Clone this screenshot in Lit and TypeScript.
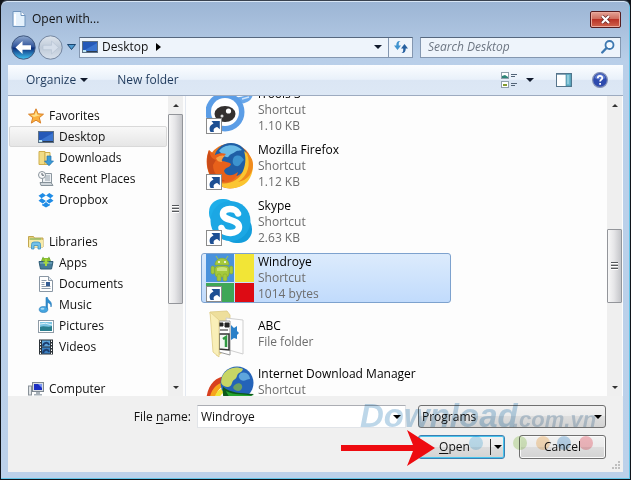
import { LitElement, html, css, svg, nothing } from "lit";
import { customElement, property } from "lit/decorators.js";
import { classMap } from "lit/directives/class-map.js";

const shortcut = svg`
  <rect x=".5" y="32.5" width="15" height="15" fill="#fff" stroke="#8b8b8b"/>
  <path d="M4.500 46C2.500 42 4 39 7.500 37.500L5.500 35h8.300v8.300L11.200 41C8 41.500 7 43.500 8 46z" fill="#1d4f93"/>`;

const small: Record<string, unknown> = {
  page: svg`<path d="M2 .5h8l4 4v11H2z" fill="#e4f1fc" stroke="#6f94bd"/><path d="M10 .5v4h4" fill="#fff" stroke="#6f94bd"/><path d="M4 3v11" stroke="#fff" stroke-width="2"/>`,
  desktop: svg`<rect x="0" y="2" width="16" height="12" fill="#5e7185"/><rect x="1" y="3" width="14" height="9" fill="#2458b8"/><path d="M1 12 15 4v8z" fill="#3a74d0"/><rect x="1" y="11" width="3" height="2" fill="#b9e4f4"/><rect x="5" y="12" width="10" height="1" fill="#2c3b4e"/>`,
  star: svg`<path d="M8 .8l2.100 5 5.400.4-4.200 3.500 1.400 5.400L8 12.200l-4.700 2.900 1.400-5.400L.5 6.200l5.400-.4z" fill="#fbb03c" stroke="#d9822b"/><path d="M8 3l1.300 3.800 3.700.3L6 9 3 7.100l3.700-.3z" fill="#ffe08a"/>`,
  downloads: svg`<path d="M1 1.500h6v13H1z" fill="#f1dc86" stroke="#cfae4c"/><path d="M7 2.500h5v12H7z" fill="#f8eaa6" stroke="#cfae4c"/><path d="M9 6h4v5h2.500l-4.500 4.700L6.500 11H9z" fill="#3b9ad6" stroke="#2272b0" stroke-width=".7"/>`,
  recent: svg`<path d="M4.500 2.500h9v10h-9z" fill="#eef1f4" stroke="#8c979f"/><path d="M7 5h5M7 7h5M7 9h5" stroke="#93a0aa"/><path d="M2 11.500h11l2 3H3z" fill="#cfd6db" stroke="#87929a"/><circle cx="4" cy="4" r="3.500" fill="#f8f9fa" stroke="#8a949c"/><path d="M4 2v2.200h2" fill="none" stroke="#58636c"/>`,
  dropbox: svg`<g fill="#1f8ce6"><path d="M4.700 1 .5 3.800l3 2.500L8 3.600zM11.300 1l4.200 2.800-3 2.500L8 3.600zM3.500 6.300l-3 2.500 4.200 2.700L8 8.900zM12.500 6.300l3 2.500-4.200 2.700L8 8.900zM4 12l.9.5L8 10l3.100 2.500.9-.5v1.200L8 15.500l-4-2.300z"/></g>`,
  libraries: svg`<path d="M.5 2.500h5l1 1.500h8.500v9H.5z" fill="#e5cf78" stroke="#c2a750"/><path d="M1 6h14v7H1z" fill="#f8eba9"/><path d="M2 5h11" stroke="#76b96a"/><path d="M3.500 15V10.500Q3.500 8 6 8h4q2.500 0 2.500 2.500V15H10v-3.500H6V15z" fill="#73c1ea" stroke="#3d8fc0" stroke-width=".8"/>`,
  apps: svg`<path d="M3 6 5 1.500 7 5zM9 5l2-3.500L13 6z" fill="#5a9c2f"/><rect x="4" y="3" width="8" height="5" rx="2" fill="#8bbf2f"/><path d="M1 6.500h14l-1.500 7.500h-11z" fill="#467c98" stroke="#2f5d77"/><path d="M2 8h12" stroke="#7fb5cc"/><path d="M8 4v7M5.500 7.500h5" stroke="#a6d83c" stroke-width="2"/>`,
  documents: svg`<path d="M1.500.5h9l4 4v11h-13z" fill="#fff" stroke="#8a97a4"/><path d="M10.500.5v4h4" fill="#dfe7ee" stroke="#8a97a4"/><path d="M3.500 4.500h5M3.500 6.500h3M3.500 8.500h3M3.500 10.500h9M3.500 12.500h9" stroke="#8d9cac"/><rect x="8" y="6" width="4" height="4" fill="#355d93"/>`,
  music: svg`<path d="M8 .5h1.500c.3 3.500 5.500 3.500 3.500 9.500 0-3-1.500-4-3.500-4.500v6.800H8z" fill="#2f8ed0" stroke="#2479b8" stroke-width=".6"/><ellipse cx="5.500" cy="12.500" rx="4.300" ry="3" fill="#45a5e0" stroke="#2479b8" stroke-width=".6"/><ellipse cx="4.500" cy="11.700" rx="2" ry="1" fill="#a5d9f5"/>`,
  pictures: svg`<rect x=".5" y="2.500" width="15" height="12" fill="#fff" stroke="#8f9ba6"/><rect x="2" y="4" width="12" height="9" fill="#7cc5e3"/><path d="M2 9c4-2 8 1 12-1v5H2z" fill="#2a7f8f"/><path d="M2 6q5-2 12 1" stroke="#dff3fa" fill="none"/>`,
  videos: svg`<rect x="1" y=".5" width="14" height="15" fill="#2c3338"/><rect x="4" y="1.500" width="8" height="6" fill="#5da4da"/><rect x="4" y="8.500" width="8" height="6" fill="#3b7fc0"/><path d="M5 7c1-4 5-4 6-1M5 14c1-4 5-4 6-1" stroke="#1c3e70" stroke-width="2" fill="none"/><path d="M2.500 1.500v14M13.500 1.500v14" stroke="#fff" stroke-dasharray="1.500 1.500"/>`,
  computer: svg`<rect x=".5" y="5" width="3" height="9" fill="#dfe3e6" stroke="#8a9299"/><rect x="4.500" y="1.500" width="11" height="9" fill="#d9dde2" stroke="#7d8790"/><rect x="6" y="3" width="8" height="6" fill="#1c2fc2"/><path d="M10 3h4v4z" fill="#7996f2"/><path d="M8 11h4v2h2v1.500H6V13h2z" fill="#a8b1b9"/>`,
  refresh: svg`<path d="M7.500 2C5.500 2.500 5.800 4.500 5.800 6.500H8L4.500 11 1 6.500h2.300C3.200 3.500 4.500 1.500 7.500 2z" fill="#3f93cf"/><path d="M8.500 14c2-.5 1.700-2.500 1.700-4.500H8L11.500 5 15 9.500h-2.300c.1 3-1.200 5-4.200 4.500z" fill="#255f9f"/>`,
  search: svg`<circle cx="9.500" cy="6" r="4" fill="#f3f9ff" stroke="#3e78b0" stroke-width="1.800"/><path d="M6.500 9 2.200 13.500" stroke="#3e78b0" stroke-width="2.400" stroke-linecap="round"/>`,
  views: svg`<g fill="#fff" stroke="#90a0ab"><rect x=".5" y=".5" width="7" height="6"/><rect x=".5" y="9.500" width="7" height="6"/></g><path d="M1 6V4l3-1 3 2v1z" fill="#2d8577"/><path d="M2 12h4v2H2z" fill="#839c2f"/><path d="M10 2.500h6M10 4.500h4M10 11.500h6M10 13.500h4" stroke="#536477"/>`,
  pane: svg`<rect x=".5" y="1.500" width="15" height="13" fill="#fff" stroke="#56748b"/><path d="M1 2.500h14" stroke="#8ba6b8"/><rect x="10" y="2" width="5" height="12" fill="#6bb6cc" stroke="#3f7f98" stroke-width=".6"/><path d="M12 3v9" stroke="#b9e2ec"/>`,
  help: svg`<circle cx="8" cy="8" r="7.400" fill="#2d4aae" stroke="#8390b6" stroke-width="1.200"/><path d="M2.500 6a5.800 5.800 0 0 1 11 0q-5 3-11 0" fill="#5c79cf"/><path d="M5.800 6.200C5.800 3.200 10.400 3.300 10.300 6c0 1.600-2.200 1.700-2.200 3.500M8.100 11v1.800" fill="none" stroke="#fff" stroke-width="1.800"/>`,
};

const large: Record<string, unknown> = {
  itools: svg`<path d="M30 11C36 12 41 8 47 8c-1 7-7 9-13 10z" fill="#69a7ea"/><path d="M36 13l7-2" stroke="#cfe4fa" stroke-width="1.500"/><circle cx="19" cy="26" r="19.500" fill="#5b9de6"/><circle cx="19" cy="26" r="14" fill="#fff"/><ellipse cx="19" cy="28" rx="10.500" ry="8" fill="#33302f"/><circle cx="22.500" cy="25" r="2.600" fill="#fff"/><circle cx="16" cy="30" r="1.500" fill="#ddd"/>${shortcut}`,
  firefox: svg`<circle cx="24" cy="24" r="22.500" fill="#e9761f"/><circle cx="25" cy="18" r="17" fill="#1f5fa6"/><path d="M13 9c5-7 17-8 23-1-2 1-5 0-7 2s-4 1-6 4-5 0-10-5z" fill="#6bbbe6"/><path d="M28 15c4-3 8-1 10 3-3 2-4 7-8 6s-4-6-2-9z" fill="#3c93cf"/><path d="M38 9c9 6 12 20 4 30-8 9-24 10-33 1 13 4 24-1 28-11 3-7 3-14 1-20z" fill="#fbc531"/><path d="M41 12c4 10 1 22-9 28 10-2 15-9 15-17 0-5-2-9-6-11z" fill="#f08b1d"/><path d="M3 8l6 5c4-2 8-2 11-1-2 2-4 4-4 7 4 1 7 1 9 3-1 4-6 3-7 7 2 6 9 5 14 1-2 9-10 12-18 9C3 38-3 22 3 8z" fill="#e8611a"/><path d="M3 8c1 6 3 9 7 10l-3 5c0 8 5 13 12 16C6 42-3 27 3 8z" fill="#c94a18"/><path d="M10 16c4-3 7-3 9-2-3 2-4 4-3 6-3 0-5-1-6-4z" fill="#f6a047"/>${shortcut}`,
  skype: svg`<rect x="3" y="1" width="28" height="27" rx="13" fill="#1eaee9"/><rect x="17" y="18" width="29" height="27" rx="13" fill="#139ddb"/><circle cx="24.500" cy="23" r="20" fill="#1ba7e4"/><path d="M32 15.500c-2-6-15-6-15 .5 0 7.500 16 4.500 16 13 0 7.500-16 8-17.500 1" fill="none" stroke="#fff" stroke-width="6.500" stroke-linecap="round"/>${shortcut}`,
  windroye: svg`<rect width="28" height="28" fill="#4a92dc"/><rect x="29" width="19" height="28" fill="#f2e536"/><rect y="29" width="28" height="19" fill="#3fa757"/><rect x="29" y="29" width="19" height="19" fill="#dd0b14"/><g fill="#a5c93c" stroke="#86aa2b" stroke-width=".6"><path d="M9 11c0-9 14-9 14 0z"/><rect x="9" y="12" width="14" height="11" rx="3"/><rect x="5" y="12" width="3.500" height="8" rx="1.700"/><rect x="23.500" y="12" width="3.500" height="8" rx="1.700"/><rect x="11" y="20" width="4" height="7" rx="1.500"/><rect x="17" y="20" width="4" height="7" rx="1.500"/></g><path d="M12 5 10 2M20 5l2-3" stroke="#a5c93c"/><circle cx="13" cy="8" r="1" fill="#fff"/><circle cx="19" cy="8" r="1" fill="#fff"/><path d="M11 14q5-2 10 0v3H11z" fill="#cbe27c"/>${shortcut}`,
  folder: svg`<path d="M4 2l17-1 3 4v32l-13 9z" fill="#eedf9c" stroke="#dcc981" stroke-width=".8"/><path d="M20 8l17 2v34l-14-4z" fill="#fdfdfd" stroke="#cfcfcf"/><path d="M25 15l3 3 3-2v5l2 2-2 2v4l-3-1-3 2z" fill="#2a80c8"/><path d="M13 11h11v34l-11-3z" fill="#fff" stroke="#9a9a9a"/><path d="M13 13h4v3h-4zM19 13h4v4h-4zM14 20h8" fill="#252525" stroke="#252525"/><path d="M13 24h10v16l-10-1z" fill="#f3f8f3" stroke="#333" stroke-width="1.500"/><path d="M17 29l3-2v10" fill="none" stroke="#2f9a41" stroke-width="2.500"/><path d="M4 2l9 8v37l-6-5z" fill="#f9efb8" stroke="#e0cd86" stroke-width=".8"/>`,
  idm: svg`<path d="M0 36C1 19 9 11 20 10l-4 7C8 22 6 30 9 40z" fill="#d8401f"/><path d="M3 40c0-15 6-21 14-24l-1 5C10 25 8 32 12 43z" fill="#f7a41c"/><path d="M7 41c0-11 4-17 10-19v5c-5 4-5 9-3 16z" fill="#f0e63a"/><circle cx="31" cy="17" r="16.500" fill="#2463b8"/><path d="M16 11C19 3 29-1 37 3c-1 4-5 3-6 7s-4 3-5 7-4 5-8 3-3-5-2-9z" fill="#c8d665"/><path d="M35 7c5-2 9 2 9 6-3 0-6 3-9 1s-3-5 0-7z" fill="#5ea5dd"/><path d="M30 18c4-2 7 1 6 4s-4 4-7 2-2-4 1-6z" fill="#6b9f63"/><path d="M17 21c8 6 16 6 31 7-5 4-10 5-16 5 4 6 8 10 15 14H26c-7-7-10-15-9-26z" fill="#0c5a1a"/><path d="M20 25c9 5 17 2 28 5v17c-9-2-17-7-20-14-4-1-6-3-8-8z" fill="#25a52e"/>${shortcut}`,
};

@customElement("app-icon")
class AppIcon extends LitElement {
  @property() name = "";
  @property({ type: Boolean, reflect: true }) large = false;
  static styles = css`
    :host { display: block; flex: none; width: 16px; height: 16px; }
    :host([large]) { width: 48px; height: 48px; }
    svg { display: block; width: 100%; height: 100%; }
  `;
  render() {
    const size = this.large ? 48 : 16;
    return html`<svg viewBox="0 0 ${size} ${size}" aria-hidden="true">${(this.large ? large : small)[this.name] ?? nothing}</svg>`;
  }
}

@customElement("scroll-rail")
class ScrollRail extends LitElement {
  @property({ type: Number }) before = 0;
  @property({ type: Number }) thumb = 1;
  @property({ type: Number }) after = 0;
  static styles = css`
    :host { display: flex; flex-direction: column; flex: none; width: 15px; background: #efefef; }
    .arrow { flex: none; height: 18px; padding: 0; border: 0; background: none; display: grid; place-items: center; }
    .arrow::before { content: ""; border: 3px solid transparent; border-top-width: 0; border-bottom-color: #333; }
    .arrow.down::before { border-top: 3px solid #333; border-bottom: 0; }
    .thumb { box-sizing: border-box; border: 1px solid #93959a; border-radius: 1px; background: linear-gradient(90deg, #f7f7f7, #e6e6e8 45%, #c4c5c9); display: grid; place-items: center; }
    .grip { width: 7px; height: 8px; background: repeating-linear-gradient(#55585c 0 1px, #fff 1px 2px, #bbb 2px 3px); }
  `;
  render() {
    return html`
      <button class="arrow" aria-label="Scroll up"></button>
      <div style="flex:${this.before} 0 0"></div>
      <div class="thumb" style="flex:${this.thumb} 0 0"><div class="grip"></div></div>
      <div style="flex:${this.after} 0 0"></div>
      <button class="arrow down" aria-label="Scroll down"></button>`;
  }
}

const places = [
  { title: "Favorites", icon: "star", items: [["desktop", "Desktop"], ["downloads", "Downloads"], ["recent", "Recent Places"], ["dropbox", "Dropbox"]] },
  { title: "Libraries", icon: "libraries", items: [["apps", "Apps"], ["documents", "Documents"], ["music", "Music"], ["pictures", "Pictures"], ["videos", "Videos"]] },
  { title: "Computer", icon: "computer", items: [] },
];

const files = [
  { icon: "itools", name: "iTools 3", lines: ["Shortcut", "1.10 KB"] },
  { icon: "firefox", name: "Mozilla Firefox", lines: ["Shortcut", "1.12 KB"] },
  { icon: "skype", name: "Skype", lines: ["Shortcut", "2.63 KB"] },
  { icon: "windroye", name: "Windroye", lines: ["Shortcut", "1014 bytes"] },
  { icon: "folder", name: "ABC", lines: ["File folder"] },
  { icon: "idm", name: "Internet Download Manager", lines: ["Shortcut", ""] },
];

@customElement("app-root")
class AppRoot extends LitElement {
  static styles = css`
    * { box-sizing: border-box; }
    :host { display: block; background: #10141a; font: 12px/16px "Open Sans", "Noto Sans", sans-serif; color: #111; }
    button, input, select { font: inherit; color: inherit; margin: 0; }
    button { padding: 0; border: 0; background: none; }
    .window { display: flex; flex-direction: column; height: 100vh; min-height: 360px; padding: 1px 7px 7px; border: 1px solid #10141a; border-top-color: #39424f; border-radius: 7px 7px 0 0; background: linear-gradient(#9cb5d4, #b9cfe9 60px, #bcd1ea); box-shadow: inset -1px -1px #62c5e8, inset 0 1px #d8e6f5; }
    .title { flex: none; display: flex; align-items: center; gap: 5px; height: 32px; padding: 2px 2px 0 3px; }
    .title h1 { flex: 1; margin: 0; font: inherit; }
    .close { width: 31px; height: 17px; border: 1px solid #571d20; border-radius: 2px; background: linear-gradient(#e3a397, #cf6a5a 48%, #b93326 50%, #d0644e); box-shadow: inset 0 0 0 1px #eba99c; display: grid; place-items: center; }
    .close svg { width: 11px; height: 9px; }
    .nav { flex: none; display: flex; align-items: center; height: 31px; padding: 0 2px 5px 3px; }
    .round { display: block; width: 25px; height: 25px; flex: none; margin-right: 2px; }
    .round svg { display: block; }
    .caret { display: block; flex: none; border: 4px solid transparent; border-top-color: #111a2c; border-bottom: 0; }
    .history { width: 13px; margin-right: 1px; display: grid; place-items: center; }
    .history svg { display: block; }
    .address, .search { display: flex; align-items: center; height: 21px; border: 1px solid #8497b0; border-top-color: #56677e; background: #eef4fb; }
    .address { flex: 1; min-width: 0; padding-left: 2px; gap: 4px; }
    .crumb-arrow { border: 4px solid transparent; border-left: 5px solid #000; border-right: 0; margin-left: 4px; }
    .drop { margin-left: auto; width: 20px; height: 100%; display: grid; place-items: center; }
    .refresh { align-self: stretch; width: 24px; border-left: 1px solid #8497b0; display: grid; place-items: center; margin-left: -4px; }
    .search { flex: none; width: 201px; margin-left: 7px; padding: 0 4px 0 7px; }
    .search input { flex: 1; min-width: 0; padding: 0; border: 0; outline: 0; background: none; font-style: italic; }
    .search input::placeholder { color: #6d7683; opacity: 1; }
    .toolbar { flex: none; display: flex; align-items: center; height: 31px; padding: 0 15px 0 18px; color: #1e395b; background: linear-gradient(#fbfdff, #e9f1fa 48%, #dbe6f4 50%, #dde8f5); border-bottom: 1px solid #9dabc0; }
    .toolbar button { display: flex; align-items: center; gap: 4px; }
    .toolbar .new { margin-left: 29px; }
    .toolbar .views { margin-left: auto; gap: 9px; }
    .toolbar .pane { margin: 0 20px 0 22px; }
    .body { flex: 1; min-height: 0; display: flex; background: #fdfdfd; }
    .side { flex: none; width: 160px; overflow: hidden; padding: 9px 1px 0; }
    .group { margin-bottom: 21px; }
    .place { display: flex; align-items: center; gap: 5px; height: 21px; padding-left: 28px; border: 1px solid transparent; color: inherit; text-decoration: none; }
    .head { padding-left: 18px; }
    .picked { border-color: #d9d9d9; border-radius: 2px; background: linear-gradient(#f8f8f8, #e6e6e6); }
    .files { flex: 1; min-width: 0; overflow: hidden; margin-left: 2px; border-left: 1px solid #e3e8f0; }
    .files ul { list-style: none; margin: -11px 0 0 15px; padding: 0; display: grid; gap: 6px; }
    .file { display: flex; align-items: center; gap: 4px; width: 250px; max-width: 100%; height: 50px; padding-left: 4px; border: 1px solid transparent; border-radius: 3px; color: #6d6d6d; }
    .file strong { display: block; font-weight: 400; color: #000; }
    .line { min-height: 16px; }
    .file.on { border-color: #7da2ce; background: linear-gradient(#dcebfc, #c1dbfc); }
    .rail { margin-right: 1px; }
    .footer { flex: none; position: relative; display: grid; grid-template-columns: 183px minmax(0, 1fr) 188px; column-gap: 6px; row-gap: 7px; padding: 9px 17px 13px 0; background: #f0f0f0; }
    .footer label { justify-self: end; align-self: center; }
    u { text-underline-offset: 2px; }
    .combo { display: flex; margin-right: 6px; height: 23px; background: #fff; border: 1px solid #e1e4e8; border-top-color: #abadb3; }
    .combo input { flex: 1; min-width: 0; border: 0; outline: 0; padding: 0 3px; background: none; }
    .combo .drop { width: 17px; }
    .type { position: relative; display: flex; }
    .type select { appearance: none; width: 100%; height: 23px; padding: 0 3px; border: 1px solid #707070; border-radius: 3px; background: linear-gradient(#f2f2f2, #ebebeb 48%, #dddddd 50%, #d3d3d3); }
    .type .caret { position: absolute; right: 4px; top: 10px; }
    .footer .caret { border-top-color: #000; }
    .actions { grid-column: 3; display: grid; grid-template-columns: 87px 87px; justify-content: space-between; }
    .btn { height: 24px; border: 1px solid #707070; border-radius: 3px; background: linear-gradient(#f2f2f2, #ebebeb 48%, #dddddd 50%, #d3d3d3); box-shadow: inset 0 0 0 1px #fafafa; }
    .split { display: flex; border-color: #3c7fb1; box-shadow: inset 0 0 0 1px #48c5ee; }
    .split button:first-child { flex: 1; }
    .split button:last-child { width: 14px; margin: 3px 0; border-left: 1px solid #333; display: grid; place-items: center; }
    .mark { position: absolute; right: 18px; top: 0; width: 246px; height: 76px; pointer-events: none; mix-blend-mode: multiply; }
    .mark .brand { font: italic 700 33px "Liberation Sans", sans-serif; fill: #6ea6cf; opacity: .45; }
    .mark .domain { font: italic 700 22px "Liberation Sans", sans-serif; fill: #7ca1be; opacity: .42; }
    .pointer { position: absolute; right: 188px; top: 34px; width: 94px; height: 36px; pointer-events: none; }
    .grip { position: absolute; right: 3px; bottom: 2px; width: 9px; height: 9px; }
  `;

  render() {
    return html`
      <main class="window">
        <header class="title">
          <app-icon name="page"></app-icon>
          <h1>Open with...</h1>
          <button class="close" aria-label="Close"><svg viewBox="0 0 11 9"><path d="M2 1l7 7M9 1 2 8" stroke="#6a2a2a" stroke-width="3.600"/><path d="M2 1l7 7M9 1 2 8" stroke="#fff" stroke-width="2.200"/></svg></button>
        </header>

        <nav class="nav" aria-label="Location">
          <button class="round" aria-label="Back"><svg viewBox="0 0 25 25">
            <defs><linearGradient id="b" x2="0" y2="1"><stop stop-color="#8fa9cf"/><stop offset=".48" stop-color="#2e529a"/><stop offset=".52" stop-color="#0b2c7a"/><stop offset="1" stop-color="#3fc4f2"/></linearGradient></defs>
            <circle cx="12.500" cy="12.500" r="11.700" fill="url(#b)" stroke="#40587e"/>
            <path d="M4.500 12.500l7-6.500v4.300H20v4.400h-8.500V19z" fill="#fff"/></svg></button>
          <button class="round" aria-label="Forward"><svg viewBox="0 0 25 25">
            <defs><linearGradient id="f" x2="0" y2="1"><stop stop-color="#dfe6ee"/><stop offset=".5" stop-color="#bfcad8"/><stop offset="1" stop-color="#d8e1ec"/></linearGradient></defs>
            <circle cx="12.500" cy="12.500" r="11.700" fill="url(#f)" stroke="#73859f"/>
            <path d="M20.500 12.500l-7-6.500v4.300H5v4.400h8.500V19z" fill="#d5deea" stroke="#b4c1d1" stroke-width=".6"/></svg></button>
          <button class="history" aria-label="Recent locations"><svg width="9" height="6" viewBox="0 0 9 6"><path d="M.5.5h8l-4 5z" fill="#4e9ad0" stroke="#1c456e"/></svg></button>
          <div class="address">
            <app-icon name="desktop"></app-icon><span>Desktop</span><i class="crumb-arrow"></i>
            <button class="drop" aria-label="Previous locations"><i class="caret"></i></button>
            <button class="refresh" aria-label="Refresh"><app-icon name="refresh"></app-icon></button>
          </div>
          <div class="search"><input type="text" placeholder="Search Desktop" aria-label="Search Desktop"><app-icon name="search"></app-icon></div>
        </nav>

        <div class="toolbar">
          <button>Organize <i class="caret"></i></button>
          <button class="new">New folder</button>
          <button class="views" aria-label="Change your view"><app-icon name="views"></app-icon><i class="caret"></i></button>
          <button class="pane" aria-label="Preview pane"><app-icon name="pane"></app-icon></button>
          <button aria-label="Help"><app-icon name="help"></app-icon></button>
        </div>

        <section class="body">
          <nav class="side" aria-label="Places">
            ${places.map((g) => html`<div class="group">
              <a class="place head" href="#"><app-icon name=${g.icon}></app-icon>${g.title}</a>
              ${g.items.map(([icon, label]) => html`<a href="#" class=${classMap({ place: true, picked: label === "Desktop" })}><app-icon name=${icon}></app-icon>${label}</a>`)}
            </div>`)}
          </nav>
          <scroll-rail .before=${0} .thumb=${189} .after=${74}></scroll-rail>
          <div class="files"><ul>
            ${files.map((f) => html`<li class=${classMap({ file: true, on: f.name === "Windroye" })}>
              <app-icon large name=${f.icon}></app-icon>
              <div><strong>${f.name}</strong>${f.lines.map((l) => html`<div class="line">${l}</div>`)}</div>
            </li>`)}
          </ul></div>
          <scroll-rail class="rail" .before=${115} .thumb=${73} .after=${75}></scroll-rail>
        </section>

        <footer class="footer">
          <label for="name">File <u>n</u>ame:</label>
          <div class="combo"><input id="name" type="text" value="Windroye"><button class="drop" aria-label="Recent names"><i class="caret"></i></button></div>
          <div class="type"><select aria-label="File type"><option>Programs</option></select><i class="caret"></i></div>
          <div class="actions">
            <div class="btn split"><button><u>O</u>pen</button><button aria-label="Open options"><i class="caret"></i></button></div>
            <button class="btn">Cancel</button>
          </div>
          <svg class="mark" viewBox="0 0 246 76" aria-hidden="true">
            <text class="brand" x="1" y="31">Download</text><text class="domain" x="154" y="31">.com.vn</text>
            <g opacity=".35"><circle cx="117" cy="47" r="7" fill="#57b4e6"/><circle cx="161" cy="47" r="7" fill="#8fc64f"/><circle cx="184" cy="47" r="7" fill="#f7a541"/><circle cx="205" cy="47" r="7" fill="#3f8fd0"/><circle cx="227" cy="47" r="7" fill="#ee4557"/></g>
          </svg>
          <svg class="pointer" viewBox="0 0 94 36" aria-hidden="true"><path d="M0 15h72L66 0l28 18-28 18 6-15H0z" fill="#ee0b10"/></svg>
          <svg class="grip" viewBox="0 0 9 9" aria-hidden="true"><path d="M7 0h2v2H7zM4 3h2v2H4zM7 3h2v2H7zM1 6h2v2H1zM4 6h2v2H4zM7 6h2v2H7z" fill="#bfbfbf"/></svg>
        </footer>
      </main>`;
  }
}
